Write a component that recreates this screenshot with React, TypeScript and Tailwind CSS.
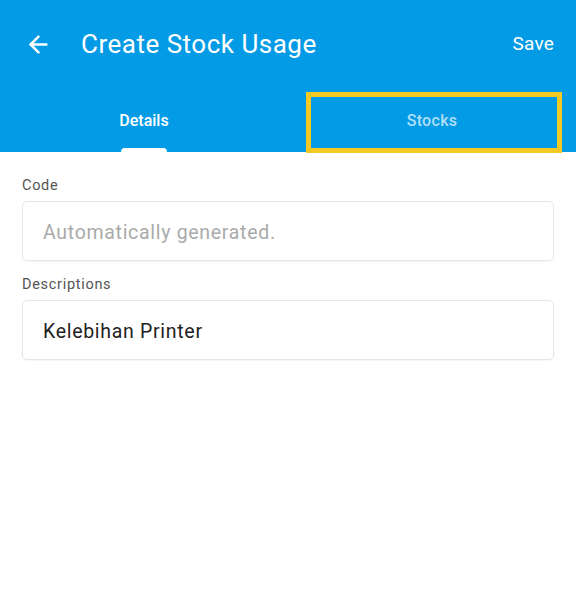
import { ArrowLeft } from "lucide-react";

const FONT = { fontFamily: "Roboto, 'Noto Sans', sans-serif" };

function Field({ label, value, placeholder }: { label: string; value?: string; placeholder?: string }) {
  return (
    <div className="flex flex-col">
      <label className="text-[14.5px] leading-[20px] tracking-[0.7px] text-[#555]">{label}</label>
      <div className="mt-[5px] flex h-[60px] items-center rounded-[5px] border border-[#e6e6e6] px-[20px] pt-[3px] shadow-[0_1px_1px_rgba(0,0,0,0.04)]">
        {value ? (
          <span className="text-[19.5px] tracking-[0.7px] text-[#222]">{value}</span>
        ) : (
          <span className="text-[19.5px] tracking-[0.7px] text-[#aaa]">{placeholder}</span>
        )}
      </div>
    </div>
  );
}

export default function App() {
  return (
    <div className="h-[595px] w-[576px] bg-white" style={FONT}>
      {/* app bar + tabs */}
      <header className="bg-[#039be5] text-white">
        <div className="flex h-[88px] items-center pl-[25px] pr-[22px]">
          <ArrowLeft size={27} strokeWidth={2.2} className="text-white" />
          <h1 className="ml-[29px] flex-1 text-[26px] font-normal tracking-[0.5px]">Create Stock Usage</h1>
          <span className="text-[19px] tracking-[0.2px]">Save</span>
        </div>
        <div className="grid h-[64px] grid-cols-2">
          <div className="relative flex items-center justify-center pt-[2px]">
            <span className="text-[16px] font-medium">Details</span>
            <span className="absolute bottom-0 left-[121px] h-[4px] w-[46px] rounded-t-[4px] bg-white" />
          </div>
          <div className="relative flex items-center justify-center pt-[2px]">
            <span className="text-[16px] font-medium tracking-[0.3px] text-white/70">Stocks</span>
            {/* highlight annotation */}
            <span className="absolute left-[18px] top-[4px] h-[61px] w-[256px] border-[5px] border-[#f5c923]" />
          </div>
        </div>
      </header>

      <main className="flex flex-col gap-[14px] px-[22px] pt-[24px]">
        <Field label="Code" placeholder="Automatically generated." />
        <Field label="Descriptions" value="Kelebihan Printer" />
      </main>
    </div>
  );
}
